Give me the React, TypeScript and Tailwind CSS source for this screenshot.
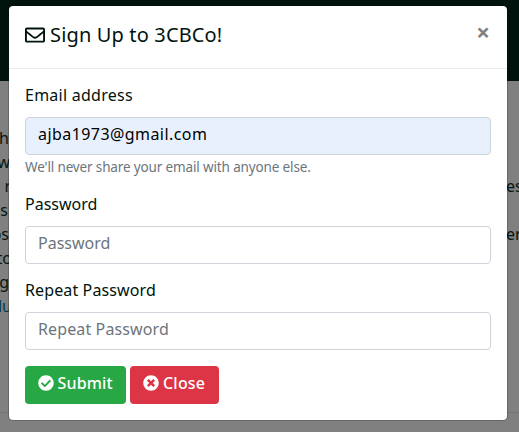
import { FaCheckCircle, FaRegEnvelope, FaTimesCircle } from "react-icons/fa";

const rows = [
  { left: "th", right: "", box: "w-[9px]" },
  { left: "w", right: "", box: "w-[10px]" },
  { left: "r", right: "es", box: "w-[11px]" },
  { left: "s", right: "", box: "w-[8px]" },
  { left: "os", right: "er", box: "w-[9px]" },
  { left: "to", right: "", box: "w-[12px]" },
  { left: "g", right: "", box: "w-[9px]" },
  { left: "lu", right: "", box: "w-[12px] text-[#063747]" },
];

function Backdrop() {
  return (
    <div className="h-full bg-[#808080] text-[16px] leading-[24px] text-[#06150f]">
      <div className="h-[81px] bg-[#00140d]" />
      <div className="h-[331px] pt-[45px]">
        {rows.map((row) => (
          <div key={row.left} className="flex h-[24px] justify-between overflow-hidden">
            <span className={`flex justify-end ${row.box}`}>{row.left}</span>
            <span className="w-[13px] whitespace-nowrap">{row.right}</span>
          </div>
        ))}
      </div>
      <div className="h-px bg-[#737373]" />
    </div>
  );
}

const inputClass =
  "mt-2 block h-[38px] w-full rounded-[4px] border border-[#ced4da] px-3 pb-[5px] text-[16px] outline-none placeholder:text-[#6c757d] placeholder:opacity-100";

export default function App() {
  return (
    <div className="relative h-[432px] w-[519px] overflow-hidden font-['Noto_Sans','Open_Sans',sans-serif]">
      <Backdrop />
      <div className="absolute top-[5px] left-[8px] w-[500px] rounded-[5px] border border-black/20 bg-white bg-clip-padding text-[#00140d]">
        <div className="flex h-[63px] justify-between border-b border-[#e9ecef] pt-[14px] pr-[17px] pl-4">
          <h5 className="flex h-[30px] items-center text-[20px] leading-[30px]">
            <FaRegEnvelope className="mr-[5px] mb-px size-5" />
            <span className="tracking-[0.15px]">Sign Up to 3CBCo!</span>
          </h5>
          <button className="-mt-px h-[26px] font-['Open_Sans',sans-serif] text-[24px] leading-[26px] font-bold text-[#808080]">×</button>
        </div>
        <form className="px-4 pt-4 pb-4 text-[16px] leading-[24px]" onSubmit={(e) => e.preventDefault()}>
          <div className="h-[109px]">
            <label className="block h-[24px] leading-[21px] tracking-[0.25px]">Email address</label>
            <input className={`${inputClass} bg-[#e8f0fe] tracking-[0.43px] text-black`} defaultValue="ajba1973@gmail.com" />
            <small className="block h-[23px] text-[13.5px] leading-[24px] tracking-[-0.14px] text-[#6c757d]">
              We'll never share your email with anyone else.
            </small>
          </div>
          <div className="h-[86px]">
            <label className="block h-[24px] leading-[21px]">Password</label>
            <input className={inputClass} type="password" placeholder="Password" />
          </div>
          <div className="h-[86px]">
            <label className="block h-[24px] leading-[21px] tracking-[0.12px]">Repeat Password</label>
            <input className={`${inputClass} tracking-[0.12px]`} type="password" placeholder="Repeat Password" />
          </div>
          <div className="flex gap-1 font-medium text-white">
            <button className="flex h-[38px] w-[101px] items-center rounded-[4px] bg-[#28a745] pb-[4px] pl-[12.5px]">
              <FaCheckCircle className="mr-1 size-4" />
              <span className="tracking-[0.15px]">Submit</span>
            </button>
            <button className="flex h-[38px] w-[89px] items-center rounded-[4px] bg-[#dc3545] pb-[4px] pl-[13px]">
              <FaTimesCircle className="mr-1 size-4" />
              <span className="tracking-[0.2px]">Close</span>
            </button>
          </div>
        </form>
      </div>
    </div>
  );
}
